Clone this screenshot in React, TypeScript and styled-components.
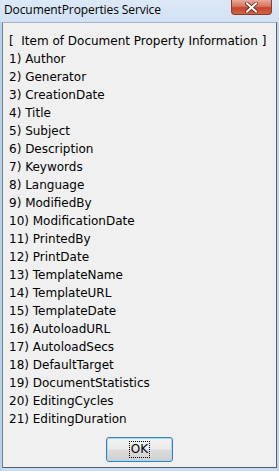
import React from 'react';
import styled, { createGlobalStyle } from 'styled-components';

const GlobalStyle = createGlobalStyle`
  html, body {
    margin: 0;
    padding: 0;
  }
  body {
    font-family: 'Liberation Sans', Arial, sans-serif;
  }
`;

const items = [
  'Author',
  'Generator',
  'CreationDate',
  'Title',
  'Subject',
  'Description',
  'Keywords',
  'Language',
  'ModifiedBy',
  'ModificationDate',
  'PrintedBy',
  'PrintDate',
  'TemplateName',
  'TemplateURL',
  'TemplateDate',
  'AutoloadURL',
  'AutoloadSecs',
  'DefaultTarget',
  'DocumentStatistics',
  'EditingCycles',
  'EditingDuration',
];

const Window = styled.div`
  width: 279px;
  height: 471px;
  display: flex;
  flex-direction: column;
  box-sizing: border-box;
  background: linear-gradient(90deg, #b4cfec 0px, #c9dcf1 3px, #c9dcf1 276px, #b4cfec 279px);
`;

const TitleBar = styled.div`
  height: 22px;
  display: flex;
  align-items: flex-start;
  justify-content: space-between;
  padding: 0 7px 0 4px;
  background: linear-gradient(180deg, #dbe8f6 0%, #d2e2f4 100%);
`;

const Caption = styled.span`
  font-family: 'Open Sans', 'Liberation Sans', sans-serif;
  font-size: 12px;
  line-height: 20px;
  color: #000;
  letter-spacing: -0.1px;
`;

const CloseButton = styled.div`
  width: 41px;
  height: 15px;
  box-sizing: border-box;
  border: 1px solid #8c3b2b;
  border-top: none;
  border-radius: 0 0 4px 4px;
  background: linear-gradient(180deg, #e9a899 0%, #d9735e 45%, #c8432b 55%, #d0644a 100%);
  display: flex;
  align-items: center;
  justify-content: center;
`;

const ClientFrame = styled.div`
  flex: 1;
  margin: 0 2px 3px 2px;
  border-top: 1px solid #a9b4c0;
  border-left: 1px solid #6e7a88;
  border-right: 1px solid #56616e;
  border-bottom: 1px solid #56616e;
  background: #f0f0f0;
  display: flex;
  flex-direction: column;
  padding: 9px 6px 0 6px;
`;

const List = styled.div`
  display: flex;
  flex-direction: column;
`;

const Line = styled.div`
  height: 18px;
  line-height: 18px;
  font-family: 'DejaVu Sans', 'Liberation Sans', sans-serif;
  font-size: 12px;
  color: #000;
  white-space: pre;
`;

const Footer = styled.div`
  display: flex;
  justify-content: center;
  padding-top: 9px;
`;

const OkButton = styled.button`
  width: 67px;
  height: 25px;
  padding: 0;
  border: 1px solid #3c7fb1;
  border-radius: 3px;
  box-shadow: inset 0 0 0 1px #a7d8f6;
  background: linear-gradient(180deg, #f2f2f2 0%, #ebebeb 48%, #dddddd 52%, #cfcfcf 100%);
  font-family: 'DejaVu Sans', 'Liberation Sans', sans-serif;
  font-size: 12px;
  color: #000;
  display: flex;
  align-items: center;
  justify-content: center;
`;

const FocusLabel = styled.span`
  border: 1px dotted #000;
  padding: 0 1px;
  line-height: 15px;
`;

const CloseGlyph = () => (
  <svg width="13" height="11" viewBox="0 0 13 11">
    <path
      d="M2 1.5 L11 9.5 M11 1.5 L2 9.5"
      stroke="#5a2a20"
      strokeWidth="3.6"
      strokeLinecap="square"
    />
    <path
      d="M2 1.5 L11 9.5 M11 1.5 L2 9.5"
      stroke="#ffffff"
      strokeWidth="2"
      strokeLinecap="square"
    />
  </svg>
);

const App: React.FC = () => {
  return (
    <>
      <GlobalStyle />
      <Window>
        <TitleBar>
          <Caption>DocumentProperties Service</Caption>
          <CloseButton>
            <CloseGlyph />
          </CloseButton>
        </TitleBar>
        <ClientFrame>
          <List>
            <Line>{'[  Item of Document Property Information ]'}</Line>
            {items.map((name, i) => (
              <Line key={name}>{`${i + 1}) ${name}`}</Line>
            ))}
          </List>
          <Footer>
            <OkButton>
              <FocusLabel>OK</FocusLabel>
            </OkButton>
          </Footer>
        </ClientFrame>
      </Window>
    </>
  );
};

export default App;
